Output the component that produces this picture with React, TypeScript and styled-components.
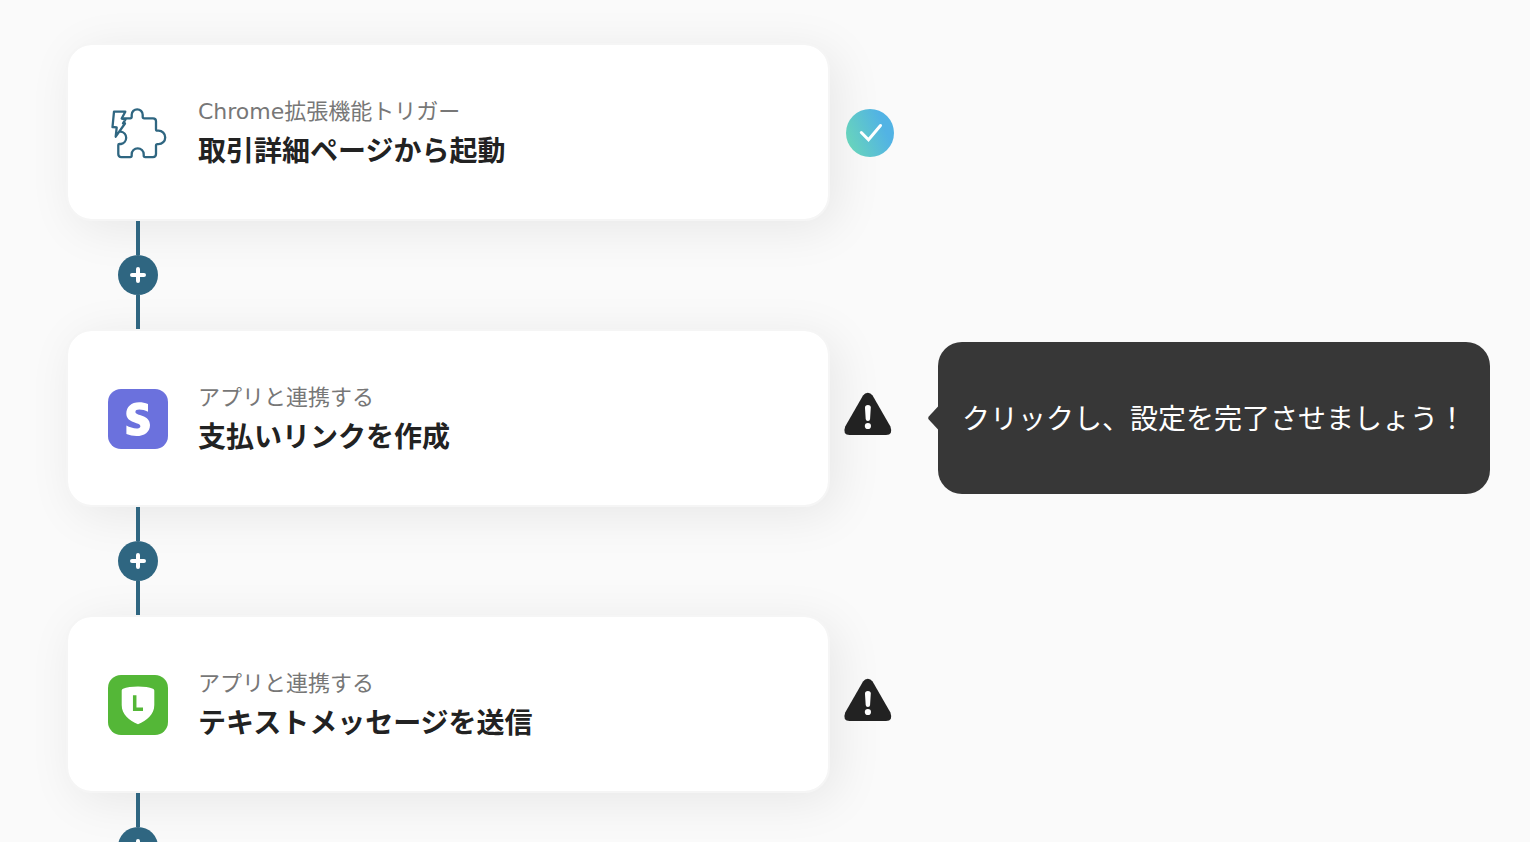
import React from "react";
import styled, { createGlobalStyle } from "styled-components";

const GlobalStyle = createGlobalStyle`
  *, *::before, *::after { box-sizing: border-box; }
  body {
    margin: 0;
    background: #fafafa;
    color: #222;
    font-family: "DejaVu Sans", "Noto Sans CJK JP", sans-serif;
  }
`;

const Page = styled.main`
  height: 100vh;
  overflow: hidden;
  padding: 43px 40px 0 66px;
`;

const Flow = styled.ol`
  list-style: none;
  margin: 0;
  padding: 0;
`;

const StepRow = styled.div`
  display: grid;
  grid-template-columns: minmax(0, 1fr) 644px;
  gap: 16px;
  align-items: center;
`;

const Card = styled.article`
  display: flex;
  align-items: center;
  gap: 30px;
  min-height: 178px;
  padding: 2px 40px 0;
  border: 2px solid #f5f5f5;
  border-radius: 26px;
  background: #fff;
  background-clip: padding-box;
  box-shadow: 8px 8px 48px rgba(0, 0, 0, 0.08);
`;

const AppIcon = styled.svg`
  flex: none;
  width: 60px;
  height: 60px;
`;

const CardText = styled.div`
  min-width: 0;
  padding-bottom: 6px;
`;

const Kind = styled.p`
  margin: 0;
  font-size: 22px;
  line-height: 38px;
  color: #777;
`;

const Title = styled.h2`
  margin: 0;
  font-family: "Noto Sans CJK JP", sans-serif;
  font-size: 28px;
  line-height: 36px;
  font-weight: 700;
`;

const Aside = styled.div`
  display: flex;
  align-items: center;
  gap: 44px;
`;

const StatusIcon = styled.svg`
  flex: none;
  width: 48px;
  height: 48px;
  overflow: visible;
`;

const Tooltip = styled.div`
  position: relative;
  flex: none;
  padding: 55px 24px 57px;
  border-radius: 24px;
  background: #373737;
  color: #fff;
  font-family: "Noto Sans CJK JP", sans-serif;
  font-size: 28px;
  line-height: 40px;
  white-space: nowrap;
`;

const TooltipArrow = styled.svg`
  position: absolute;
  right: 100%;
  top: 50%;
  width: 10px;
  height: 24px;
  margin-top: -12px;
`;

const Connector = styled.div`
  position: relative;
  display: flex;
  flex-direction: column;
  align-items: center;
  width: 40px;
  margin-left: 52px;
`;

const Line = styled.span`
  width: 4px;
  height: 34px;
  background: #2f6681;
`;

const AddButton = styled.button`
  display: flex;
  align-items: center;
  justify-content: center;
  width: 40px;
  height: 40px;
  padding: 0;
  border: 0;
  border-radius: 50%;
  background: #2f6681;
  cursor: pointer;
`;

function PuzzleIcon() {
  return (
    <AppIcon viewBox="0 0 60 60" fill="none" stroke="#2f6681" strokeWidth="2.3" strokeLinejoin="round" strokeLinecap="round" aria-hidden="true">
      <path d="M15.500 15.300h6.700q1.500 0 1.500-1.500v-2a5.500 5.500 0 0 1 11 0v2q0 1.500 1.500 1.500H45q3 0 3 3v7.900q0 1.500 1.500 1.500h1a6.700 6.700 0 0 1 0 13.400h-1q-1.500 0-1.500 1.500v8.500q0 3-3 3h-7.800q-1.500 0-1.500-1.500v-1.300a6 6 0 0 0-12 0v1.300q0 1.500-1.500 1.500h-8.900q-3 0-3-3V42q0-1 1.200-1h1.500a6.300 6.300 0 0 0 0-12.400H12" />
      <path d="M6 8.700h11.300L13.700 15.500l3.800 0.800-2.500 4 2 0.200L7.700 33.700l1-9.400-4.200-0.300z" fill="#fff" />
    </AppIcon>
  );
}

function StripeIcon() {
  return (
    <AppIcon viewBox="0 0 60 60" aria-hidden="true">
      <rect width="60" height="60" rx="13" fill="#6b71dd" />
      <path d="M40 15v7.800c-3-1.500-6-2.200-8.700-2.200-2.400 0-3.900.8-3.900 2.300 0 4.100 14.600 2.300 14.600 13 0 7-5.600 11.100-13.500 11.100-3.300 0-7-.7-10.100-2V36.600c3 1.700 7 2.900 10.100 2.900 2.100 0 3.900-.6 3.900-2.300 0-4.300-14.100-2.600-14.100-12.700 0-6.500 5-11.300 12.800-11.300 3.100 0 6.100.5 8.900 1.800z" fill="#fff" />
    </AppIcon>
  );
}

function ShieldIcon() {
  return (
    <AppIcon viewBox="0 0 60 60" aria-hidden="true">
      <rect width="60" height="60" rx="13" fill="#54b737" />
      <path d="M30 11.500c6 0 11.500.8 15 2.200q1.300.5 1.300 1.800V30c0 9.500-7.500 15.500-16.300 19.300C21.200 45.500 13.700 39.500 13.700 30V15.500q0-1.300 1.300-1.800c3.500-1.400 9-2.200 15-2.200z" fill="#fff" />
      <path d="M26.700 20.300v14H35" fill="none" stroke="#54b737" strokeWidth="3.500" />
    </AppIcon>
  );
}

function DoneStatus() {
  return (
    <StatusIcon viewBox="0 -1 48 48" role="img" aria-label="設定完了">
      <defs>
        <linearGradient id="done" x1="0" y1="0.700" x2="1" y2="0.300">
          <stop offset="0.050" stopColor="#67d3bd" />
          <stop offset="0.800" stopColor="#52b3e4" />
        </linearGradient>
      </defs>
      <circle cx="24" cy="24" r="24" fill="url(#done)" />
      <path d="M15.300 23.500l7.200 7.200L34.500 16.500" fill="none" stroke="#fff" strokeWidth="3" strokeLinecap="round" />
    </StatusIcon>
  );
}

function WarningStatus() {
  return (
    <StatusIcon viewBox="0 0 48 48" role="img" aria-label="設定が未完了">
      <path d="M17 1.600Q19 -1.300 21.800 -1.300T26.600 1.600L44.400 32.500Q47.400 41 40 41H3.600Q-3.800 41-.800 32.500z" fill="#222" />
      <path d="M19 13.500q0-2.500 2.900-2.500t2.900 2.500l-.7 11.500q-.2 2-2.200 2t-2.200-2z" fill="#fff" />
      <circle cx="21.900" cy="32" r="3.100" fill="#fff" />
    </StatusIcon>
  );
}

interface Step {
  kind: string;
  title: string;
  icon: React.ReactNode;
  done?: boolean;
  hint?: string;
}

const steps: Step[] = [
  { kind: "Chrome拡張機能トリガー", title: "取引詳細ページから起動", icon: <PuzzleIcon />, done: true },
  { kind: "アプリと連携する", title: "支払いリンクを作成", icon: <StripeIcon />, hint: "クリックし、設定を完了させましょう！" },
  { kind: "アプリと連携する", title: "テキストメッセージを送信", icon: <ShieldIcon /> },
];

export default function App() {
  return (
    <Page>
      <GlobalStyle />
      <Flow lang="ja">
        {steps.map((step) => (
          <li key={step.title}>
            <StepRow>
              <Card>
                {step.icon}
                <CardText>
                  <Kind>{step.kind}</Kind>
                  <Title>{step.title}</Title>
                </CardText>
              </Card>
              <Aside>
                {step.done ? <DoneStatus /> : <WarningStatus />}
                {step.hint && (
                  <Tooltip role="tooltip">
                    <TooltipArrow viewBox="0 0 10 24" aria-hidden="true">
                      <path d="M10 0.500L1 10.200q-1.600 1.800 0 3.600L10 23.500z" fill="#373737" />
                    </TooltipArrow>
                    {step.hint}
                  </Tooltip>
                )}
              </Aside>
            </StepRow>
            <Connector>
              <Line />
              <AddButton type="button" aria-label="ステップを追加">
                <svg width="16" height="16" viewBox="0 0 16 16" fill="none" stroke="#fff" strokeWidth="4" strokeLinecap="round" aria-hidden="true">
                  <path d="M8 2v12M2 8h12" />
                </svg>
              </AddButton>
              <Line />
            </Connector>
          </li>
        ))}
      </Flow>
    </Page>
  );
}
